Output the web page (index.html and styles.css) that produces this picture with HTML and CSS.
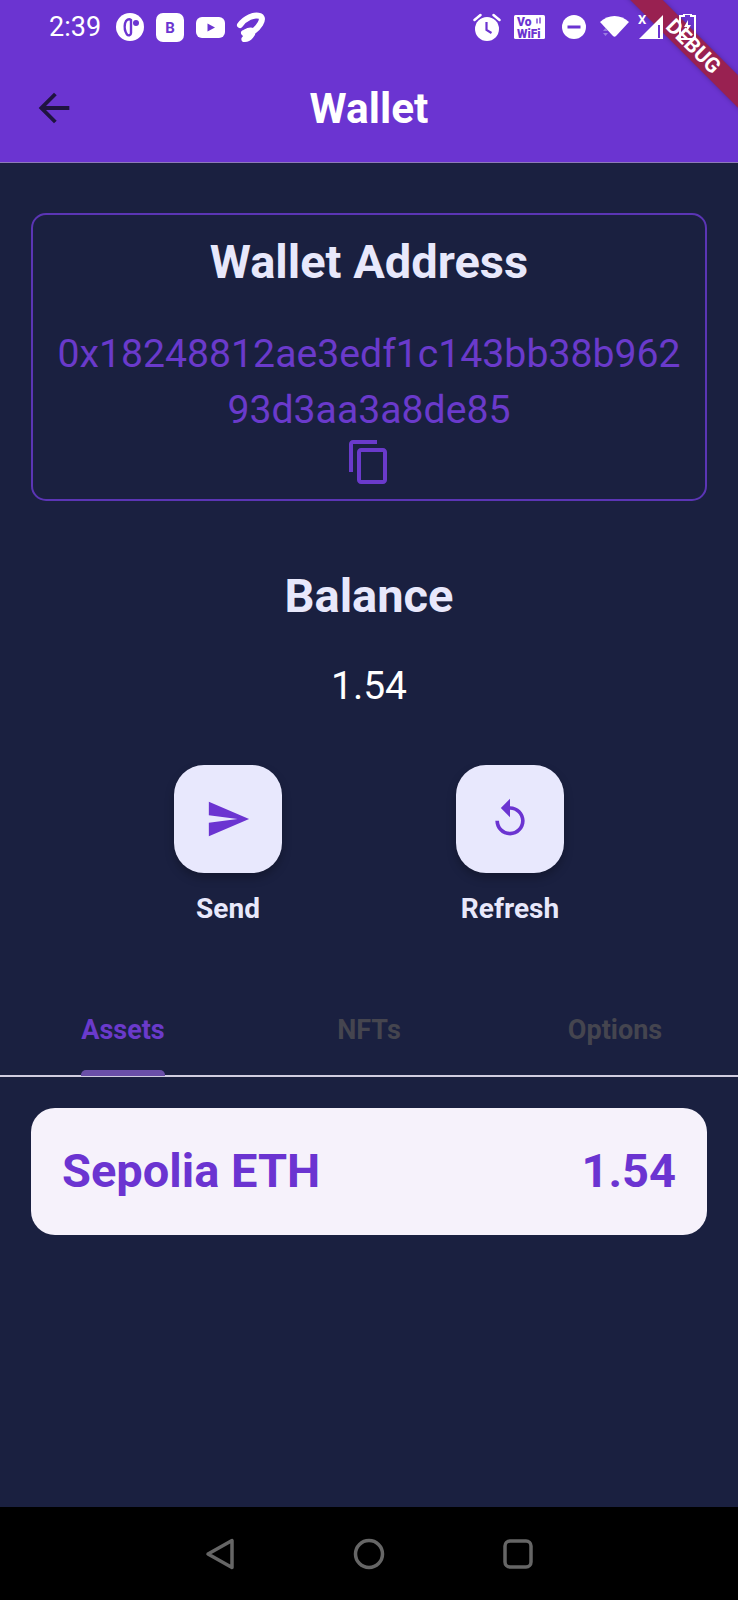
FILE: index.html
```html
<!DOCTYPE html>
<html>
<head>
  <title>Wallet</title>
  <link rel="stylesheet" href="styles.css">
</head>
<body>
<div id="phone">
  <div id="header">
    <div id="status-bar">
      <span id="status-time">2:39</span>
      <div id="status-left">
        <svg width="28" height="28" viewBox="0 0 28 28"><circle cx="14" cy="14" r="14" fill="#fff"/><path d="M15 7c-2-1.500-5-.5-6 3.500-.7 3.500 0 8 2 11 1.200 1.500 4 1 4-1.500z" fill="none" stroke="#6b34d1" stroke-width="2.400"/><circle cx="20" cy="10" r="3" fill="#6b34d1"/></svg>
        <div class="b-icon">B</div>
        <svg width="29" height="21" viewBox="0 0 29 21"><rect width="29" height="21" rx="6" fill="#fff"/><path d="M11.500 6.500l7.500 4-7.500 4z" fill="#6b34d1"/></svg>
        <svg class="ic-airtel" width="30" height="30" viewBox="0 0 30 30"><path d="M4 13C9 6 18 2 24 4c5 3-1 12-10 18-4 3-7 6-5 5 4 0 9-6 7-8-2-2-6 1-8 2" fill="none" stroke="#fff" stroke-width="6" stroke-linecap="round" stroke-linejoin="round"/></svg>
      </div>
      <div id="status-right">
        <svg width="28" height="29" viewBox="0 0 28 29"><circle cx="14" cy="16" r="12" fill="#fff"/><path d="M1.500 7l6-5M26.500 7l-6-5" stroke="#fff" stroke-width="2.500" stroke-linecap="round"/><path d="M13.500 9v8l5 3" fill="none" stroke="#6b34d1" stroke-width="2.200"/></svg>
        <svg class="ic-vowifi" width="31" height="24" viewBox="0 0 31 24"><rect width="31" height="24" rx="1.500" fill="#fff"/><text x="3" y="11" class="vo-text">Vo</text><text x="3" y="22.500" class="vo-text">WiFi</text><path d="M23 3.500v5M26 2.500v6" stroke="#6b34d1" stroke-width="1.300"/></svg>
        <svg class="ic-dnd" width="24" height="24" viewBox="0 0 24 24"><circle cx="12" cy="12" r="12" fill="#fff"/><rect x="5.500" y="10.500" width="13" height="3" fill="#6b34d1"/></svg>
        <svg class="ic-wifi" width="30" height="24" viewBox="0 0 30 24"><path d="M0 7c8-8 21-8 29 0L16 21c-1 1-2 1-3 0z" fill="#fff"/><path d="M3 16l2.500-3 2.500 3zM3 18l2.500 3 2.500-3z" fill="#9a7be0"/></svg>
        <svg class="ic-signal" width="26" height="32" viewBox="0 0 26 32"><path d="M25 8v24H1z" fill="#fff"/><rect x="20" y="18" width="2" height="13" fill="#6b34d1"/><text x="0" y="17" class="x-text">X</text></svg>
        <svg class="ic-battery" width="17" height="26" viewBox="0 0 17 26"><path d="M5 1V0h7v2h4v23H1V2h4z" fill="none" stroke="#fff" stroke-width="2"/><path d="M9 6L5 13h3l-1 6 5-8H9z" fill="#fff"/></svg>
      </div>
    </div>
    <div id="app-bar">
      <svg id="back-icon" width="46" height="46" viewBox="0 0 24 24"><path d="M20 11H7.830l5.590-5.590L12 4l-8 8 8 8 1.410-1.410L7.830 13H20v-2z"/></svg>
      <div id="app-title">Wallet</div>
    </div>
  </div>

  <div id="main">
    <div class="address-card">
      <div class="address-title">Wallet Address</div>
      <div class="address-value">0x18248812ae3edf1c143bb38b962<br>93d3aa3a8de85</div>
      <svg class="copy-icon" width="48" height="48" viewBox="0 0 24 24"><path d="M16 1H4c-1.100 0-2 .9-2 2v14h2V3h12V1zm3 4H8c-1.100 0-2 .9-2 2v14c0 1.100.9 2 2 2h11c1.100 0 2-.9 2-2V7c0-1.100-.9-2-2-2zm0 16H8V7h11v14z"/></svg>
    </div>

    <div class="balance-title">Balance</div>
    <div class="balance-value">1.54</div>

    <div class="actions">
      <div class="action">
        <div class="action-btn"><svg width="46" height="46" viewBox="0 0 24 24"><path d="M2.010 21L23 12 2.010 3 2 10l15 2-15 2z"/></svg></div>
        <div class="action-label">Send</div>
      </div>
      <div class="action">
        <div class="action-btn"><svg width="44" height="44" viewBox="0 0 24 24"><path d="M12 5V1L7 6l5 5V7c3.310 0 6 2.690 6 6s-2.690 6-6 6-6-2.690-6-6H4c0 4.420 3.580 8 8 8s8-3.580 8-8-3.580-8-8-8z"/></svg></div>
        <div class="action-label">Refresh</div>
      </div>
    </div>

    <div class="tabs">
      <div class="tab active"><span>Assets</span></div>
      <div class="tab"><span>NFTs</span></div>
      <div class="tab"><span>Options</span></div>
    </div>

    <div class="token-card">
      <span>Sepolia ETH</span>
      <span>1.54</span>
    </div>
  </div>

  <div id="nav-bar">
    <svg width="32" height="36" viewBox="0 0 32 36"><path d="M4 18L28 4.500v27z" fill="none" stroke="#666" stroke-width="3.500" stroke-linejoin="round"/></svg>
    <svg width="32" height="32" viewBox="0 0 32 32"><circle cx="16" cy="16" r="13.500" fill="none" stroke="#666" stroke-width="3.500"/></svg>
    <svg width="32" height="32" viewBox="0 0 32 32"><rect x="3" y="3" width="26" height="26" rx="5" fill="none" stroke="#666" stroke-width="3.500"/></svg>
  </div>

  <div id="debug-banner">DEBUG</div>
</div>
</body>
</html>
```

FILE: styles.css
```css
body, div, span {
  margin: 0;
  padding: 0;
  font-family: 'Roboto', sans-serif;
}

#phone {
  width: 738px;
  height: 1600px;
  background: #1a2040;
  display: flex;
  flex-direction: column;
  position: relative;
  overflow: hidden;
}

/* header */
#header {
  height: 162px;
  background: #6b34d1;
  border-bottom: 1px solid #8d7bb8;
  flex: none;
}
#status-bar {
  height: 54px;
  display: flex;
  align-items: center;
  padding-left: 49px;
  color: #fff;
}
#status-time {
  font-size: 27px;
  width: 67px;
}
#status-left {
  display: flex;
  align-items: center;
  gap: 12px;
}
.b-icon {
  width: 28px;
  height: 29px;
  background: #fff;
  border-radius: 7px;
  color: #6b34d1;
  font-size: 15px;
  font-weight: 700;
  line-height: 31px;
  text-align: center;
}
.ic-airtel { margin-left: -1px; }
#status-right {
  display: flex;
  align-items: center;
  margin-left: 207px;
  position: relative;
  z-index: 2;
}
.ic-vowifi { margin-left: 13px; }
.ic-dnd { margin-left: 17px; }
.ic-wifi { margin-left: 14px; }
.ic-signal { margin-left: 8px; margin-bottom: 8px; }
.ic-battery { margin-left: 15px; }
.vo-text {
  font-family: 'Roboto', sans-serif;
  font-size: 12px;
  font-weight: 900;
  fill: #6b34d1;
}
.x-text {
  font-family: 'Roboto', sans-serif;
  font-size: 13px;
  font-weight: 700;
  fill: #fff;
}

#app-bar {
  height: 108px;
  display: flex;
  align-items: center;
  justify-content: center;
  position: relative;
}
#back-icon {
  position: absolute;
  left: 31px;
  top: 31px;
  fill: #1f1440;
}
#app-title {
  color: #fff;
  font-size: 42.4px;
  font-weight: 700;
}

/* main */
#main {
  flex: 1;
  display: flex;
  flex-direction: column;
  align-items: center;
}
.address-card {
  margin-top: 50px;
  width: 676px;
  height: 288px;
  box-sizing: border-box;
  border: 2px solid #5b35b5;
  border-radius: 15px;
  padding-top: 22px;
  display: flex;
  flex-direction: column;
  align-items: center;
}
.address-title {
  color: #e8e8fb;
  font-size: 47px;
  font-weight: 700;
  line-height: 50px;
}
.address-value {
  margin-top: 39px;
  color: #6a3acb;
  font-size: 39.2px;
  line-height: 56px;
  text-align: center;
}
.copy-icon {
  fill: #6a3acb;
  display: block;
}
.balance-title {
  margin-top: 70px;
  color: #e8e8fb;
  font-size: 47px;
  font-weight: 700;
  line-height: 50px;
}
.balance-value {
  margin-top: 43px;
  color: #fff;
  font-size: 39px;
  line-height: 44px;
}
.actions {
  margin-top: 57px;
  display: flex;
  gap: 174px;
}
.action {
  width: 108px;
  display: flex;
  flex-direction: column;
  align-items: center;
}
.action-btn {
  width: 108px;
  height: 108px;
  background: #e8e8fd;
  border-radius: 30px;
  display: flex;
  align-items: center;
  justify-content: center;
  box-shadow: 0 5px 10px rgba(0,0,0,0.25);
}
.action-btn svg {
  fill: #6b34d1;
}
.action-label {
  margin-top: 18px;
  margin-bottom: -1px;
  color: #e8e8fb;
  font-size: 28px;
  font-weight: 700;
  line-height: 36px;
}

/* tabs */
.tabs {
  margin-top: 74px;
  width: 100%;
  display: flex;
  border-bottom: 2px solid #d0cde0;
}
.tab {
  flex: 1;
  height: 75px;
  line-height: 60px;
  text-align: center;
  font-size: 27px;
  font-weight: 700;
  color: #45454f;
}
.tab span {
  display: inline-block;
  height: 75px;
  position: relative;
}
.tab.active {
  color: #6a3acb;
}
.tab.active span::after {
  content: "";
  position: absolute;
  left: 0;
  right: 0;
  bottom: -1px;
  height: 6px;
  background: #6a4fa8;
  border-radius: 5px 5px 0 0;
}

.token-card {
  margin-top: 31px;
  width: 676px;
  height: 127px;
  box-sizing: border-box;
  padding: 0 31px 3px;
  background: #f6f2fb;
  border-radius: 24px;
  display: flex;
  align-items: center;
  justify-content: space-between;
  color: #6b34d1;
  font-size: 47px;
  font-weight: 700;
}

/* android nav */
#nav-bar {
  height: 93px;
  background: #000;
  flex: none;
  display: flex;
  align-items: center;
  justify-content: center;
  gap: 117px;
}

#debug-banner {
  position: absolute;
  top: 35px;
  right: -55px;
  width: 200px;
  height: 23px;
  line-height: 23px;
  background: rgba(170,26,32,0.72);
  box-shadow: 0 0 5px rgba(0,0,0,0.25);
  color: #fff;
  font-size: 21px;
  font-weight: 700;
  text-align: center;
  transform: rotate(45deg);
  z-index: 1;
}
```
